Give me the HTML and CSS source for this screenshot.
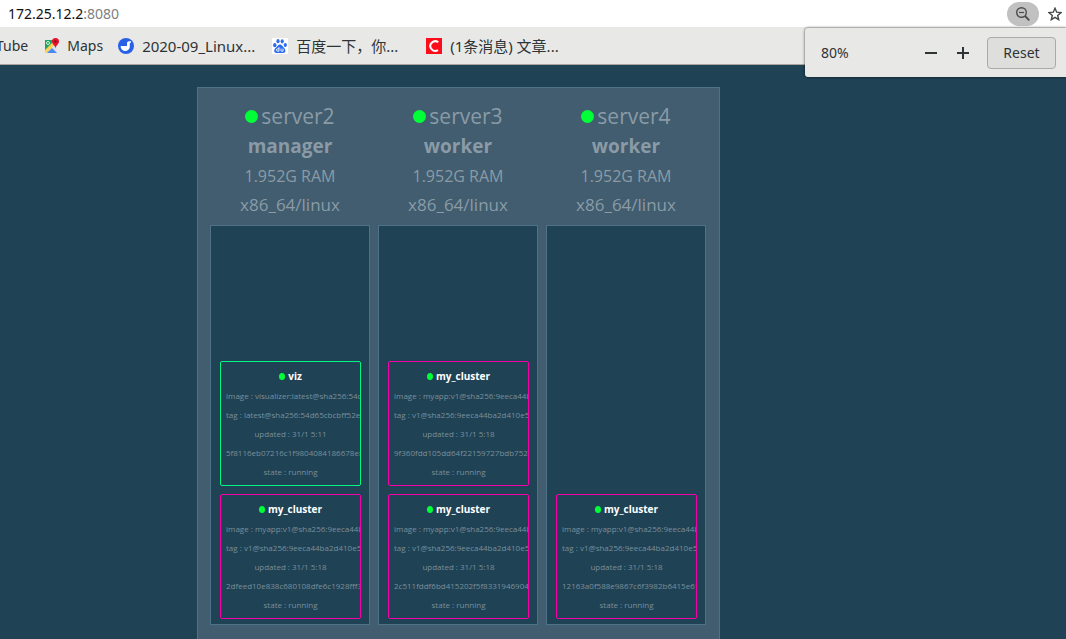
FILE: index.html
```html
<!DOCTYPE html>
<html lang="en">
<head>
<meta charset="utf-8">
<title>Visualizer</title>
<link rel="stylesheet" href="styles.css">
</head>
<body>
<header class="browser">
  <div class="address-bar">
    <div class="url">172.25.12.2<span class="port">:8080</span></div>
    <button class="zoom-button" aria-label="Zoom">
      <svg width="16" height="16" viewBox="0 0 16 16" fill="none" stroke="#4a4d50"><circle cx="6.5" cy="6.5" r="4.8" stroke-width="1.4"/><path d="M10 10l4.3 4.3" stroke-width="1.8"/><path d="M4 6.5h5" stroke-width="1.2"/></svg>
    </button>
    <button class="star-button" aria-label="Bookmark this page">
      <svg width="14" height="14" viewBox="0 0 14 14" fill="none" stroke="#45484b" stroke-width="1.4"><path d="M7 1.200l1.700 4 4.300.4-3.300 2.800 1 4.300L7 10.400l-3.700 2.300 1-4.300L1 5.600l4.300-.4z"/></svg>
    </button>
  </div>
  <nav class="bookmarks">
    <a class="bookmark tube" href="#">Tube</a>
    <a class="bookmark maps" href="#">
      <svg width="16" height="16" viewBox="0 0 16 16"><path d="M1 2h10L1 13z" fill="#1ea362"/><path d="M1 15L13 3v12z" fill="#dfe3e6"/><path d="M1 12L10 3l2 2L3 14.500l-2 .5z" fill="#ffd04b"/><path d="M3 15l5-5 5 5z" fill="#4a89f3"/><circle cx="4" cy="5" r="1.500" fill="none" stroke="#d5f0df"/><path d="M11.500 0a3.500 3.500 0 0 0-3.500 3.500c0 2.500 3 3.500 3.500 7 .5-3.500 3.500-4.500 3.500-7A3.500 3.500 0 0 0 11.500 0z" fill="#e8102a"/><circle cx="11.500" cy="3.500" r="1.200" fill="#7d1820"/></svg>
      <span>Maps</span></a>
    <a class="bookmark wide" href="#">
      <svg width="16" height="16" viewBox="0 0 16 16"><circle cx="8" cy="8" r="8" fill="#2860e8"/><path d="M2.700 8h6.300V5.200a2 2 0 0 1 2-2h2v1.600h-1.200v4.200a4.500 4.500 0 0 1-9.100-1z" fill="#fff"/></svg>
      <span>2020-09_Linux...</span></a>
    <a class="bookmark wide" href="#">
      <svg width="16" height="16" viewBox="0 0 16 16"><path d="M0 0h16v16H0z" fill="#fff"/><g fill="#2e6cf0"><ellipse cx="2.800" cy="7.200" rx="1.700" ry="2.100"/><ellipse cx="6" cy="3.200" rx="1.600" ry="2.100"/><ellipse cx="10.200" cy="3.300" rx="1.600" ry="2.100"/><ellipse cx="13.300" cy="7" rx="1.600" ry="2"/><path d="M8 6.500c2 0 2.600 2 4 3.300 1.800 1.700 2.200 5.200-.8 5.200H4.600c-3 0-3-3.500-.8-5.200C5.400 8.500 6 6.500 8 6.500z"/></g><path d="M7 9.200v4H5.700a1.200 1.200 0 1 1 0-2.400H7M9 10.600v2.100q0 .5.500.5H11v-2.600" fill="none" stroke="#fff" stroke-width=".9"/></svg>
      <span>百度一下，你...</span></a>
    <a class="bookmark wide" href="#">
      <svg width="16" height="16" viewBox="0 0 16 16"><path d="M0 0h16v16H0z" fill="#fc0d1b"/><path d="M12.300 4.200A5 4.800 0 1 0 12 12.200" fill="none" stroke="#fff" stroke-width="2"/></svg>
      <span>(1条消息) 文章...</span></a>
  </nav>
  <div class="zoom-popup">
    <span class="zoom-value">80%</span>
    <button class="step" aria-label="Zoom out"><svg width="12" height="12" viewBox="0 0 12 12"><path d="M0 5h12v2H0z" fill="#2e3436"/></svg></button>
    <button class="step" aria-label="Zoom in"><svg width="12" height="12" viewBox="0 0 12 12"><path d="M0 5h12v2H0zM5 0h2v12H5z" fill="#2e3436"/></svg></button>
    <button class="reset">Reset</button>
  </div>
</header>
<main class="page">
  <div class="cluster">
    <section class="node">
      <h2 class="node-name"><i class="dot"></i>server2</h2>
      <p class="role">manager</p>
      <p class="spec">1.952G RAM</p>
      <p class="platform">x86_64/linux</p>
      <div class="tasks">
        <article class="task viz">
          <h3 class="task-name"><i class="dot"></i>viz</h3>
          <p>image : visualizer:latest@sha256:54d</p>
          <p>tag : latest@sha256:54d65cbcbff52e</p>
          <p>updated : 31/1 5:11</p>
          <p>5f8116eb07216c1f9804084186678e8</p>
          <p>state : running</p>
        </article>
        <article class="task">
          <h3 class="task-name"><i class="dot"></i>my_cluster</h3>
          <p>image : myapp:v1@sha256:9eeca44b</p>
          <p>tag : v1@sha256:9eeca44ba2d410e5</p>
          <p>updated : 31/1 5:18</p>
          <p>2dfeed10e838c680108dfe6c1928fff3</p>
          <p>state : running</p>
        </article>
      </div>
    </section>
    <section class="node">
      <h2 class="node-name"><i class="dot"></i>server3</h2>
      <p class="role">worker</p>
      <p class="spec">1.952G RAM</p>
      <p class="platform">x86_64/linux</p>
      <div class="tasks">
        <article class="task">
          <h3 class="task-name"><i class="dot"></i>my_cluster</h3>
          <p>image : myapp:v1@sha256:9eeca44b</p>
          <p>tag : v1@sha256:9eeca44ba2d410e5</p>
          <p>updated : 31/1 5:18</p>
          <p>9f360fdd105dd64f22159727bdb752c</p>
          <p>state : running</p>
        </article>
        <article class="task">
          <h3 class="task-name"><i class="dot"></i>my_cluster</h3>
          <p>image : myapp:v1@sha256:9eeca44b</p>
          <p>tag : v1@sha256:9eeca44ba2d410e5</p>
          <p>updated : 31/1 5:18</p>
          <p>2c511fddf6bd415202f5f8331946904</p>
          <p>state : running</p>
        </article>
      </div>
    </section>
    <section class="node">
      <h2 class="node-name"><i class="dot"></i>server4</h2>
      <p class="role">worker</p>
      <p class="spec">1.952G RAM</p>
      <p class="platform">x86_64/linux</p>
      <div class="tasks">
        <article class="task">
          <h3 class="task-name"><i class="dot"></i>my_cluster</h3>
          <p>image : myapp:v1@sha256:9eeca44b</p>
          <p>tag : v1@sha256:9eeca44ba2d410e5</p>
          <p>updated : 31/1 5:18</p>
          <p>12163a0f588e9867c6f3982b6415e61</p>
          <p>state : running</p>
        </article>
      </div>
    </section>
  </div>
</main>
</body>
</html>
```
FILE: styles.css
```css
* {
  box-sizing: border-box;
  margin: 0;
}

body {
  display: flex;
  flex-direction: column;
  height: 100vh;
  overflow: hidden;
  background: #1f4255;
  font-family: "Open Sans", "Noto Sans CJK SC", sans-serif;
}

.browser {
  position: relative;
  color: #2e3436;
  font-family: "Noto Sans", "Noto Sans CJK SC", sans-serif;
  font-size: 14px;
}

.browser button {
  display: flex;
  align-items: center;
  justify-content: center;
  padding: 0;
  border: 0;
  background: none;
  color: inherit;
  font: inherit;
}

.address-bar {
  display: flex;
  align-items: center;
  height: 27px;
  padding: 0 4px 0 8px;
  background: #fff;
}

.url {
  flex: 1;
  color: #111;
  line-height: 20px;
}

.port {
  color: #808080;
}

.browser .zoom-button {
  width: 32px;
  height: 24px;
  margin-right: 9px;
  border-radius: 12px;
  background: #c1c1c1;
}

.bookmarks {
  display: flex;
  align-items: center;
  height: 38px;
  border-bottom: 1px solid #aaa69f;
  background: #e8e8e6;
  line-height: 20px;
}

.bookmark {
  display: flex;
  align-items: center;
  gap: 8px;
  margin-right: 16px;
  color: inherit;
  text-decoration: none;
  white-space: nowrap;
}

.tube {
  margin-left: -4px;
}

.maps {
  gap: 7px;
  margin-right: 15px;
}

.wide {
  flex: 0 0 138px;
  font-size: 15px;
}

.zoom-popup {
  position: absolute;
  top: 28px;
  right: 0;
  display: flex;
  align-items: center;
  width: 261px;
  height: 49px;
  padding: 0 10px 0 16px;
  border-radius: 3px 0 0 3px;
  background: #e8e8e6;
  box-shadow: 0 0 3px rgba(0, 0, 0, 0.7);
}

.zoom-value {
  flex: 1;
}

.zoom-popup .step {
  width: 32px;
  height: 32px;
}

.zoom-popup .reset {
  width: 69px;
  height: 32px;
  margin-left: 8px;
  border: 1px solid #aaaaa8;
  border-radius: 4px;
  background: #dededd;
}

.page {
  display: flex;
  flex: 1;
  align-items: stretch;
  min-height: 0;
  padding: 22px 0 0 197px;
}

.cluster {
  display: flex;
  gap: 8px;
  padding: 13px 13px 0 12px;
  border: 1px solid #4e7287;
  border-bottom: 0;
  background: #415d6f;
}

.node {
  width: 160px;
  color: #8a9ba7;
  text-align: center;
}

.node-name {
  display: flex;
  align-items: center;
  justify-content: center;
  gap: 3px;
  font-size: 21px;
  font-weight: 400;
  line-height: 30px;
}

.dot {
  width: 13px;
  height: 13px;
  border-radius: 50%;
  background: #00ff37;
}

.role {
  font-size: 19px;
  font-weight: 700;
  line-height: 30px;
}

.spec {
  font-size: 16px;
  line-height: 30px;
}

.platform {
  font-size: 17px;
  line-height: 28px;
}

.tasks {
  display: flex;
  flex-direction: column;
  justify-content: flex-end;
  gap: 8px;
  height: 400px;
  margin-top: 6px;
  padding: 0 8px 5px 9px;
  border: 1px solid #4e7287;
  background: #1f4255;
}

.task {
  overflow: hidden;
  padding: 5px 5px 4px;
  border: 1px solid #f700a9;
  border-radius: 2px;
  color: #7b8f9a;
  font-size: 8px;
  line-height: 19px;
  white-space: nowrap;
}

.viz {
  border-color: #00f783;
}

.task-name {
  display: flex;
  align-items: center;
  justify-content: center;
  gap: 3px;
  color: #fff;
  font-size: 10px;
  line-height: 19px;
}

.task-name .dot {
  width: 6px;
  height: 7px;
}
```
